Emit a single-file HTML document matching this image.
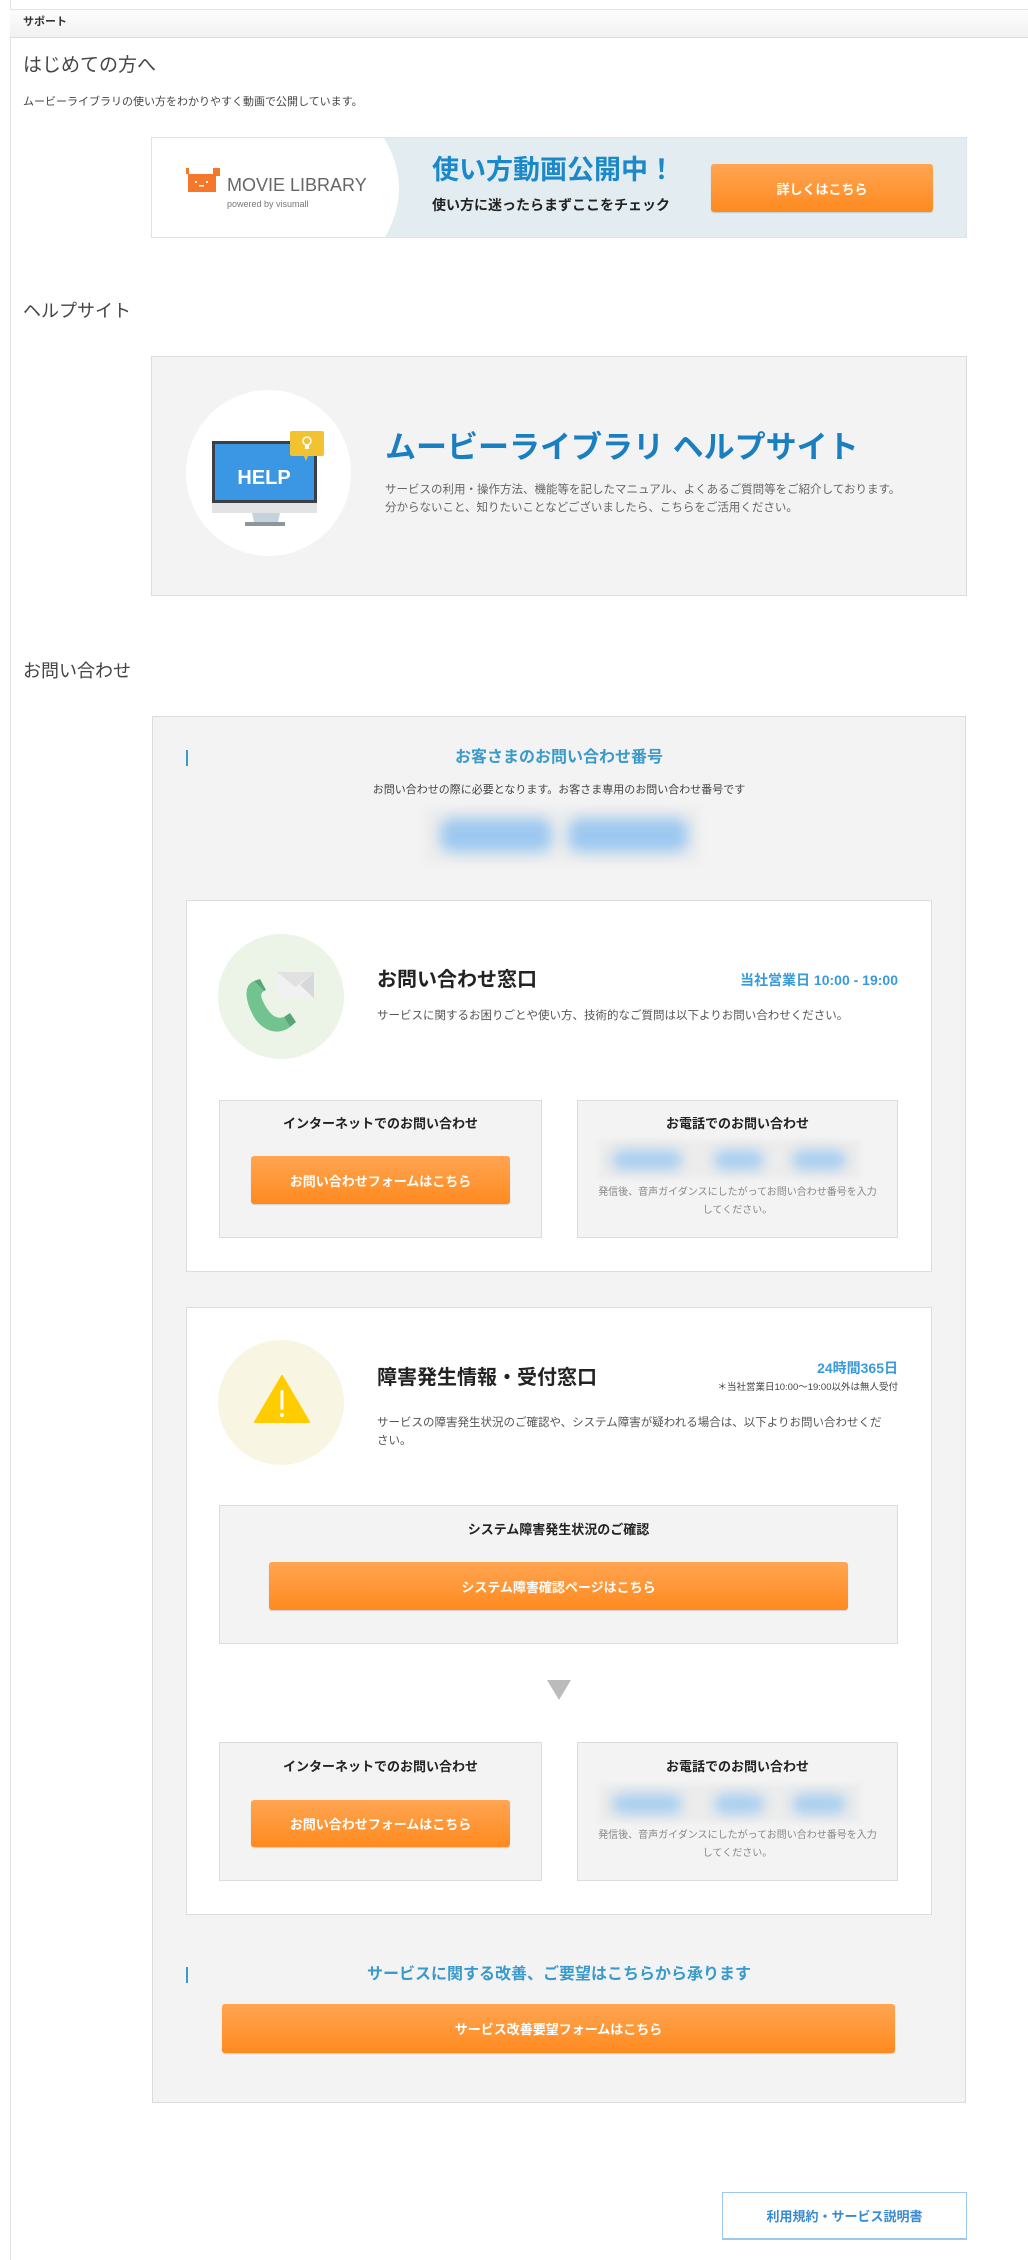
<!DOCTYPE html>
<html><head><meta charset="utf-8">
<style>
*{margin:0;padding:0;box-sizing:border-box}
body{width:1028px;height:2260px;background:#fff;position:relative;overflow:hidden;font-family:"Liberation Sans","Noto Sans CJK JP",sans-serif;color:#333}
.a{position:absolute}
.t{position:absolute;white-space:nowrap;line-height:1}
.btn{position:absolute;background:linear-gradient(#ffa552,#ff8a1f);border-radius:3px;color:#fff;font-weight:bold;font-size:13px;display:flex;align-items:center;justify-content:center;box-shadow:0 1px 1px rgba(0,0,0,.15)}
.sub{position:absolute;background:#f3f3f3;border:1px solid #dcdcdc}
.blur{position:absolute;background:#a9cff0;border-radius:12px;filter:blur(6px)}
.c{text-align:center}
</style></head><body>
<div class="a" style="left:10px;top:0;width:1px;height:2260px;background:#e2e2e2"></div>
<div class="a" style="left:10px;top:9px;width:1018px;height:29px;background:linear-gradient(#fdfdfd,#f1f1f1);border-top:1px solid #e3e3e3;border-bottom:1px solid #dcdcdc"></div>
<div class="t" style="left:23px;top:17px;font-size:11px;font-weight:bold;color:#333">サポート</div>

<div class="t" style="left:23px;top:56px;font-size:19px;color:#444">はじめての方へ</div>
<div class="t" style="left:23px;top:97px;font-size:11px;color:#444">ムービーライブラリの使い方をわかりやすく動画で公開しています。</div>

<!-- banner -->
<div class="a" style="left:151px;top:137px;width:816px;height:101px;background:#e3edf1;border:1px solid #dde3e6;overflow:hidden">
  <svg class="a" style="left:0;top:0" width="260" height="101"><path d="M0 0 H232 Q262 50 232 101 H0Z" fill="#fff"/></svg>
  <svg class="a" style="left:34px;top:30px" width="34" height="25"><rect x="0" y="0" width="3" height="6" fill="#f5782a"/><rect x="27" y="0" width="7" height="8" fill="#f5782a"/><rect x="2" y="6" width="28" height="18" fill="#f5782a"/><rect x="9" y="13" width="2" height="2" fill="#fff"/><rect x="20" y="13" width="2" height="2" fill="#fff"/><rect x="13" y="17" width="5" height="1.5" fill="#fff"/></svg>
  <div class="t" style="left:75px;top:38px;font-size:18px;color:#666">MOVIE LIBRARY</div>
  <div class="t" style="left:75px;top:62px;font-size:9px;color:#777">powered by visumall</div>
  <div class="t" style="left:280px;top:19px;font-size:27px;font-weight:bold;color:#1a88c9">使い方動画公開中！</div>
  <div class="t" style="left:280px;top:60px;font-size:14px;font-weight:bold;color:#222">使い方に迷ったらまずここをチェック</div>
  <div class="btn" style="left:559px;top:26px;width:222px;height:48px">詳しくはこちら</div>
</div>

<div class="t" style="left:23px;top:302px;font-size:18px;color:#444">ヘルプサイト</div>
<div class="a" style="left:151px;top:356px;width:816px;height:240px;background:#f3f3f3;border:1px solid #dcdcdc"></div>
<div class="a" style="left:186px;top:390px;width:165px;height:166px;border-radius:50%;background:#fff"></div>
<svg class="a" style="left:200px;top:420px" width="140" height="120">
  <rect x="12" y="21" width="105" height="62" fill="#3a3f48"/>
  <rect x="15" y="24" width="99" height="56" fill="#3b97e3"/>
  <rect x="12" y="83" width="105" height="10" fill="#e2e3e5"/>
  <path d="M52 93 H80 L78 102 H54Z" fill="#c5d3dc"/>
  <rect x="45" y="102" width="40" height="4" fill="#8e969c"/>
  <text x="64" y="64" text-anchor="middle" font-family="Liberation Sans" font-weight="bold" font-size="20" fill="#fff">HELP</text>
  <rect x="90" y="11" width="34" height="25" rx="2" fill="#f2c230"/>
  <path d="M104 36 L106 41 L108 36Z" fill="#f2c230"/>
  <circle cx="107" cy="21" r="4" fill="none" stroke="#fff" stroke-width="1.5"/><rect x="105" y="25" width="4" height="4" fill="#fff"/>
</svg>
<div class="t" style="left:385px;top:432px;font-size:31px;font-weight:bold;color:#1a7fc1">ムービーライブラリ ヘルプサイト</div>
<div class="t" style="left:385px;top:485px;font-size:11.5px;color:#666">サービスの利用・操作方法、機能等を記したマニュアル、よくあるご質問等をご紹介しております。</div>
<div class="t" style="left:385px;top:503px;font-size:11.5px;color:#666">分からないこと、知りたいことなどございましたら、こちらをご活用ください。</div>

<div class="t" style="left:23px;top:662px;font-size:18px;color:#444">お問い合わせ</div>

<!-- contact outer -->
<div class="a" style="left:152px;top:716px;width:814px;height:1387px;background:#f3f3f3;border:1px solid #dcdcdc"></div>
<div class="a" style="left:186px;top:750px;width:2px;height:16px;background:#3a9ac9"></div>
<div class="t c" style="left:152px;width:814px;top:750px;font-size:16px;font-weight:bold;color:#3a9ac9">お客さまのお問い合わせ番号</div>
<div class="t c" style="left:152px;width:814px;top:785px;font-size:11px;color:#444">お問い合わせの際に必要となります。お客さま専用のお問い合わせ番号です</div>
<div class="a" style="left:424px;top:807px;width:276px;height:56px;background:#eeeeee;filter:blur(3px)"></div>
<div class="blur" style="left:440px;top:818px;width:112px;height:34px;background:#9cc8f0;filter:blur(7px)"></div>
<div class="blur" style="left:568px;top:818px;width:120px;height:34px;background:#9cc8f0;filter:blur(7px)"></div>

<!-- card1 -->
<div class="a" style="left:186px;top:900px;width:746px;height:372px;background:#fff;border:1px solid #dcdcdc"></div>
<div class="a" style="left:218px;top:934px;width:126px;height:125px;border-radius:50%;background:#ebf4e6"></div>
<svg class="a" style="left:240px;top:965px" width="80" height="70">
  <rect x="37" y="7" width="37" height="26" fill="#f1f1f1"/>
  <path d="M37 7 L55.5 22 L74 7Z" fill="#e1e1e1"/><path d="M74 7 L74 33 L60 20Z" fill="#d6d8da"/>
  <path d="M14 16 C4 20 4 34 14 52 C24 68 40 70 50 62 L44 52 C38 54 32 52 26 42 C20 32 20 28 24 26Z" fill="#72c38f"/>
  <path d="M14 16 L20 14 L26 25 L24 26Z M50 62 L56 57 L50 48 L44 52Z" fill="#5aa577"/>
</svg>
<div class="t" style="left:377px;top:970px;font-size:20px;font-weight:bold;color:#222">お問い合わせ窓口</div>
<div class="t" style="left:650px;width:248px;text-align:right;top:973px;font-size:14px;font-weight:bold;color:#3a9ad9">当社営業日 10:00 - 19:00</div>
<div class="t" style="left:377px;top:1011px;font-size:11.5px;color:#555">サービスに関するお困りごとや使い方、技術的なご質問は以下よりお問い合わせください。</div>

<div class="sub" style="left:219px;top:1100px;width:323px;height:138px"></div>
<div class="t c" style="left:219px;width:323px;top:1117px;font-size:13px;font-weight:bold;color:#222">インターネットでのお問い合わせ</div>
<div class="btn" style="left:251px;top:1156px;width:259px;height:48px">お問い合わせフォームはこちら</div>
<div class="sub" style="left:577px;top:1100px;width:321px;height:138px"></div>
<div class="t c" style="left:577px;width:321px;top:1117px;font-size:13px;font-weight:bold;color:#222">お電話でのお問い合わせ</div>
<div class="a" style="left:599px;top:1140px;width:262px;height:38px;background:#ececec;filter:blur(2px)"></div>
<div class="blur" style="left:612px;top:1150px;width:70px;height:20px"></div>
<div class="blur" style="left:714px;top:1150px;width:50px;height:20px"></div>
<div class="blur" style="left:792px;top:1150px;width:54px;height:20px"></div>
<div class="t c" style="left:577px;width:321px;top:1188px;font-size:10px;color:#888">発信後、音声ガイダンスにしたがってお問い合わせ番号を入力</div>
<div class="t c" style="left:577px;width:321px;top:1206px;font-size:10px;color:#888">してください。</div>

<!-- card2 -->
<div class="a" style="left:186px;top:1307px;width:746px;height:608px;background:#fff;border:1px solid #dcdcdc"></div>
<div class="a" style="left:218px;top:1340px;width:126px;height:125px;border-radius:50%;background:#f8f6e2"></div>
<svg class="a" style="left:250px;top:1372px" width="64" height="54"><path d="M32 4 L59 50 H5Z" fill="#ffcc00" stroke="#ffcc00" stroke-width="2" stroke-linejoin="round"/><rect x="30.5" y="18" width="3" height="20" rx="1.5" fill="#fff"/><circle cx="32" cy="43" r="2" fill="#fff"/></svg>
<div class="t" style="left:377px;top:1368px;font-size:20px;font-weight:bold;color:#222">障害発生情報・受付窓口</div>
<div class="t" style="left:650px;width:248px;text-align:right;top:1361px;font-size:14px;font-weight:bold;color:#3a9ad9">24時間365日</div>
<div class="t" style="left:650px;width:248px;text-align:right;top:1383px;font-size:9.5px;color:#444">＊当社営業日10:00～19:00以外は無人受付</div>
<div class="t" style="left:377px;top:1418px;font-size:11.5px;color:#555">サービスの障害発生状況のご確認や、システム障害が疑われる場合は、以下よりお問い合わせくだ</div>
<div class="t" style="left:377px;top:1436px;font-size:11.5px;color:#555">さい。</div>

<div class="sub" style="left:219px;top:1505px;width:679px;height:139px"></div>
<div class="t c" style="left:219px;width:679px;top:1523px;font-size:13px;font-weight:bold;color:#222">システム障害発生状況のご確認</div>
<div class="btn" style="left:269px;top:1562px;width:579px;height:48px">システム障害確認ページはこちら</div>
<svg class="a" style="left:547px;top:1680px" width="24" height="20"><path d="M0 0 H24 L12 20Z" fill="#bbb"/></svg>

<div class="sub" style="left:219px;top:1742px;width:323px;height:139px"></div>
<div class="t c" style="left:219px;width:323px;top:1760px;font-size:13px;font-weight:bold;color:#222">インターネットでのお問い合わせ</div>
<div class="btn" style="left:251px;top:1800px;width:259px;height:47px">お問い合わせフォームはこちら</div>
<div class="sub" style="left:577px;top:1742px;width:321px;height:139px"></div>
<div class="t c" style="left:577px;width:321px;top:1760px;font-size:13px;font-weight:bold;color:#222">お電話でのお問い合わせ</div>
<div class="a" style="left:599px;top:1784px;width:262px;height:38px;background:#ececec;filter:blur(2px)"></div>
<div class="blur" style="left:612px;top:1794px;width:70px;height:20px"></div>
<div class="blur" style="left:714px;top:1794px;width:50px;height:20px"></div>
<div class="blur" style="left:792px;top:1794px;width:54px;height:20px"></div>
<div class="t c" style="left:577px;width:321px;top:1831px;font-size:10px;color:#888">発信後、音声ガイダンスにしたがってお問い合わせ番号を入力</div>
<div class="t c" style="left:577px;width:321px;top:1849px;font-size:10px;color:#888">してください。</div>

<div class="a" style="left:186px;top:1967px;width:2px;height:16px;background:#3a9ac9"></div>
<div class="t c" style="left:152px;width:814px;top:1967px;font-size:16px;font-weight:bold;color:#3a9ac9">サービスに関する改善、ご要望はこちらから承ります</div>
<div class="btn" style="left:222px;top:2004px;width:673px;height:49px">サービス改善要望フォームはこちら</div>

<div class="a" style="left:722px;top:2192px;width:245px;height:48px;border:1px solid #9cc8ee;border-bottom-width:2px;background:#fff;display:flex;align-items:center;justify-content:center;font-size:13px;font-weight:bold;color:#3a8ad0">利用規約・サービス説明書</div>
</body></html>
